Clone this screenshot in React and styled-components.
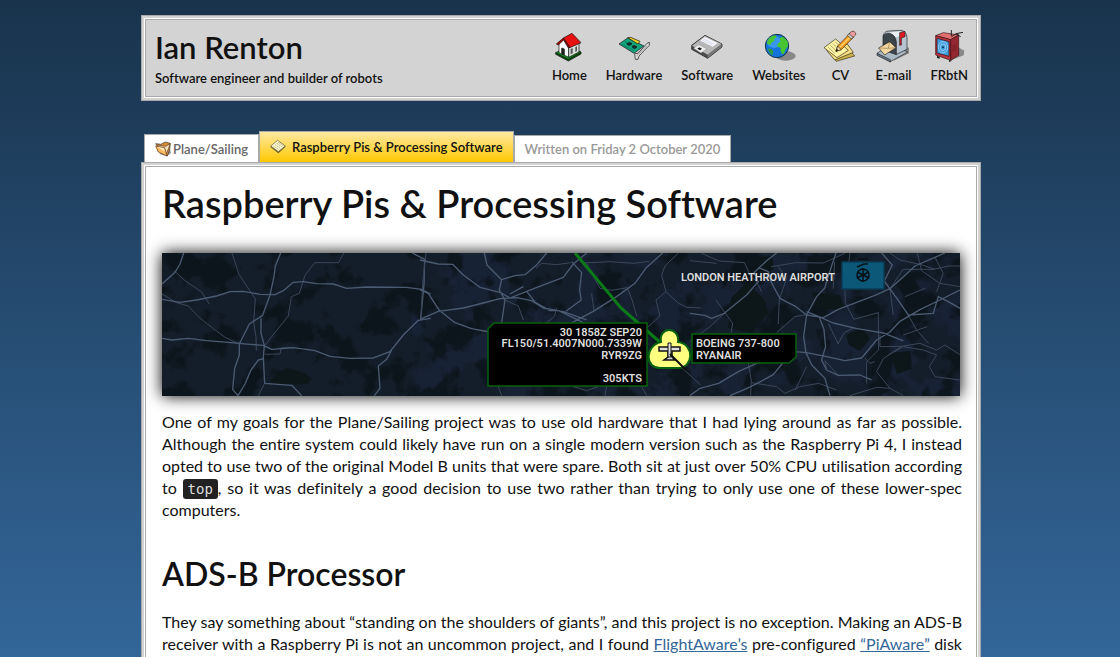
import React from "react";
import styled, { createGlobalStyle } from "styled-components";

const GlobalStyle = createGlobalStyle`
  *, *::before, *::after { box-sizing: border-box; }
  html { min-height: 100%; background: linear-gradient(#19334c, #336699) fixed; }
  body {
    margin: 0;
    color: #111;
    font: 400 16px/22px Lato, "Liberation Sans", sans-serif;
    font-variant-ligatures: none;
  }
`;

const Page = styled.div`
  max-width: 842px;
  margin: 0 auto;
  padding: 15px 0 15px 2px;
`;

const Frame = styled.div`
  border: 1px solid #a9a9a9;
  padding: 2px;
  background: #d3d3d3;
`;

const Masthead = styled.header`
  display: flex;
  justify-content: space-between;
  align-items: flex-start;
  border: 1px solid #fff;
  box-shadow: inset 0 0 0 1px #a9a9a9;
  padding: 9px 9px 9px 10px;
`;

const SiteName = styled.p`
  margin: 0 0 2px;
  font-size: 31px;
  line-height: 38px;
  font-weight: 600;
`;

const Tagline = styled.p`
  margin: 0;
  font-size: 13px;
  line-height: 20px;
  font-weight: 600;
`;

const Nav = styled.nav`
  display: flex;
  gap: 19px;
  padding-top: 2px;
`;

const NavLink = styled.a`
  display: flex;
  flex-direction: column;
  align-items: center;
  gap: 3px;
  color: #111;
  text-decoration: none;
  font-size: 13px;
  line-height: 20px;
  font-weight: 600;
`;

const NavIcon = styled.svg`
  width: 32px;
  height: 32px;
  overflow: visible;
`;

const Tabs = styled.div`
  display: flex;
  align-items: flex-end;
  margin: 30px 3px 0;
`;

const tabTones = {
  parent: { ink: "#666", fill: "#fff", height: 28 },
  current: { ink: "#111", fill: "linear-gradient(#ffe9a3, #ffc800)", height: 31 },
  date: { ink: "#999", fill: "#fff", height: 27 },
};

const Tab = styled.span`
  display: flex;
  align-items: center;
  gap: ${(p) => (p.$tone === "current" ? 6 : 2)}px;
  height: ${(p) => tabTones[p.$tone].height}px;
  padding: 0 10px;
  border: 1px solid #a9a9a9;
  border-bottom: 0;
  background: ${(p) => tabTones[p.$tone].fill};
  color: ${(p) => tabTones[p.$tone].ink};
  font-size: 13px;
  font-weight: 600;
  text-decoration: none;
  white-space: nowrap;
`;

const TabIcon = styled.svg`
  width: 16px;
  height: 16px;
`;

const Article = styled.article`
  border: 1px solid #fff;
  box-shadow: inset 0 0 0 1px #a9a9a9;
  padding: 17px;
  background: #fff;
`;

const Title = styled.h1`
  margin: 0 0 30px;
  font-size: 38px;
  line-height: 40px;
  font-weight: 600;
`;

const Heading = styled.h2`
  margin: 33px 0 17px;
  font-size: 32px;
  line-height: 40px;
  font-weight: 600;
`;

const Text = styled.p`
  margin: 0 -2px 0 0;
  text-align: justify;
  text-align-last: ${(p) => (p.$fullLastLine ? "justify" : "auto")};
`;

const Unbroken = styled.span`
  white-space: nowrap;
`;

const Code = styled.code`
  padding: 2px 5px;
  border-radius: 3px;
  background: #222;
  color: #ddd;
  font: 14px/16px "DejaVu Sans Mono", monospace;
`;

const Link = styled.a`
  color: #336699;
`;

const Banner = styled.svg`
  display: block;
  width: 100%;
  height: 143px;
  margin-bottom: 15px;
  box-shadow: 0 0 15px #000;
`;

const MapText = styled.text`
  font: 600 11px Roboto, sans-serif;
  fill: #ddd;
`;

const icons = {
  Home: (
    <g stroke="#111" strokeWidth="2" strokeLinejoin="round">
      <path d="M8 68 46 88 84 66 84 72 46 93 8 73Z" fill="#050" />
      <path d="M8 68 48 48 84 66 46 88Z" fill="#0a9c14" />
      <path d="M18 40 32 26 47 50 47 82 18 68Z" fill="#fff" />
      <path d="M47 50 78 38 78 66 47 82Z" fill="#d9d9d9" />
      <path d="M31 24 57 10 84 38 50 53Z" fill="#e81010" />
      <path d="M31 24 10 42 16 45 32 30 46 54 51 52Z" fill="#a00" />
      <path d="M26 54 34 57 34 75 26 71Z" fill="#222" />
      <path d="M53 57 59 54V70L53 73ZM67 51 72 49V63L67 66Z" fill="#555" stroke="none" />
    </g>
  ),
  Hardware: (
    <g stroke="#111" strokeWidth="2" strokeLinejoin="round">
      <path d="M3 42 29 24 78 48 48 70Z" fill="#12a57c" />
      <path d="M29 23 38 22 66 34 60 42Z" fill="#e6d42c" />
      <path d="M10 43 46 61M20 35 58 54" stroke="#087052" />
      <path d="M26 42 34 37 42 41 34 47ZM42 51 49 46 57 51 49 56Z" fill="#133" />
      <path d="M50 71 60 70 87 40 94 37V46L63 78 60 88 52 88Z" fill="#dedede" />
      <path d="M57 77 87 47" stroke="#777" />
    </g>
  ),
  Software: (
    <g strokeLinejoin="round">
      <path d="M2 46 42 16 93 42V51L50 85 2 58Z" fill="#4b4b4b" stroke="#111" strokeWidth="2" />
      <path d="M3 47 42 17 92 42 50 74Z" fill="#b6b6b6" />
      <path d="M50 74 92 43V51L50 84Z" fill="#777" />
      <path d="M41 21 80 39 65 50 28 32Z" fill="#f7f7ff" />
      <path d="M38 27 69 42M34 31 64 45" stroke="#c5c9dd" strokeWidth="2" />
      <path d="M23 44 47 56 30 69 8 55Z" fill="#eee" stroke="#777" />
      <path d="M25 52 33 56 27 61 19 56Z" fill="#111" />
    </g>
  ),
  Websites: (
    <g>
      <ellipse cx="68" cy="78" rx="30" ry="14" fill="#888" />
      <circle cx="42" cy="48" r="35" fill="#1672dc" stroke="#134" strokeWidth="3" />
      <ellipse cx="34" cy="36" rx="22" ry="18" fill="#50b0ff" opacity=".6" />
      <path d="M12 35Q20 17 38 16L41 22 33 27 34 33 25 38 23 44 13 43Z" fill="#47c530" />
      <path d="M50 23 60 20 74 34 75 49 68 58 63 71 57 73 52 61 54 54 43 50 44 41 52 35Z" fill="#47c530" />
      <path d="M14 55 24 57 31 64 28 75 21 71Z" fill="#2c9f38" />
    </g>
  ),
  CV: (
    <g stroke="#332d10" strokeWidth="2" strokeLinejoin="round">
      <path d="M17 68 68 50 92 78 37 94Z" fill="#c9b24b" />
      <path d="M8 61 70 42 88 67 32 90Z" fill="#f3dc83" />
      <path d="M0 53 35 27 73 61 39 83Z" fill="#fff3a4" />
      <path d="M12 51 32 70M19 46 40 66M27 41 46 60M34 36 49 50" stroke="#8c865a" />
      <path d="M36 64 41 48 76 12 88 22 52 59Z" fill="#f39a20" />
      <path d="M46 53 82 17" stroke="#ffd26d" strokeWidth="4" />
      <path d="M36 64 41 48 52 59Z" fill="#f2d6a5" />
      <path d="M36 64 38 57 42 61Z" fill="#111" />
      <path d="M72 14 82 5Q90 0 95 9 97 15 91 18L84 25Z" fill="#ef9aa0" />
      <path d="M70 16 75 11 87 22 82 27Z" fill="#ccc" />
    </g>
  ),
  "E-mail": (
    <g stroke="#222" strokeWidth="2" strokeLinejoin="round">
      <path d="M50 92 96 70 96 54 78 46Z" fill="#888" stroke="none" />
      <path d="M0 70 44 42 92 66 40 95Z" fill="#aab8c6" />
      <path d="M18 18Q22 3 36 3L72 1Q88 4 90 22V58L58 73Z" fill="#b7c3cf" />
      <path d="M22 9 70 4 84 12 52 24Z" fill="#e8eef4" stroke="none" />
      <path d="M18 60V20Q23 7 38 10 56 15 58 36V74Z" fill="#3d454c" />
      <path d="M5 54 38 35 57 53 23 75Z" fill="#f2d7a0" />
      <path d="M5 54 34 55 38 35M34 55 57 53" fill="none" stroke="#9a7740" />
      <path d="M68 46V8L84 4V20L73 24V45Z" fill="#e11820" />
      <path d="M0 70 40 89V96L0 76Z" fill="#687888" />
    </g>
  ),
  FRbtN: (
    <g strokeLinejoin="round">
      <path d="M54 91 92 76 94 62 76 52Z" fill="#888" />
      <g stroke="#3a0b10" strokeWidth="2">
        <path d="M8 17 31 8 77 15 53 29Z" fill="#e27070" />
        <path d="M8 17 53 29V91L8 75Z" fill="#bb343d" />
        <path d="M53 29 77 15V76L53 91Z" fill="#942730" />
        <path d="M12 25 48 35V79L12 69Z" fill="#3f9ddd" />
      </g>
      <g fill="none" stroke="#c0e4fb" strokeWidth="2">
        <ellipse cx="30" cy="52" rx="14" ry="17" />
        <ellipse cx="30" cy="52" rx="8" ry="10" />
      </g>
      <circle cx="30" cy="52" r="3" fill="#135" />
      <path d="M55 19V0M56 20 69 11 90 7M70 12 83 20" fill="none" stroke="#222" strokeWidth="3" />
      <path d="M59 50 70 43M59 57 70 50M59 64 70 57" stroke="#541219" strokeWidth="2" />
      <path d="M12 77V84L20 86V80M48 90V96L57 92" fill="#222" />
    </g>
  ),
};

const FolderIcon = () => (
  <TabIcon viewBox="0 0 48 48" aria-hidden="true">
    <path d="M12 39 36 46 48 36 44 20Z" fill="#999" />
    <path d="M2 8 18 10 30 3 46 7 44 26 37 45 22 36Z" fill="#d98c35" stroke="#333" strokeWidth="2" />
    <path d="M6 12 32 16 45 8 41 22 33 40 9 30Z" fill="#f4dfc0" stroke="#5a3a18" strokeWidth="2" />
    <path d="M2 15 29 20 36 45 10 33Z" fill="#ffb85c" stroke="#5a3a18" strokeWidth="2" />
    <path d="M6 18 26 22 29 31Z" fill="#fff0d5" />
  </TabIcon>
);

const NoteIcon = () => (
  <TabIcon viewBox="0 0 48 48" aria-hidden="true">
    <path d="M1 24 23 5 47 23 25 43Z" fill="#6b602c" />
    <path d="M2 21 23 4 46 21 25 38Z" fill="#fffbd2" stroke="#5d552b" strokeWidth="2" />
    <path d="M10 21 26 32M15 17 31 28M20 13 36 24M25 10 39 20" stroke="#99905a" strokeWidth="2" strokeDasharray="5 2" />
  </TabIcon>
);

const westRoads = {
  major: [
    "M36 178 90 187 140 180 200 168 240 155 280 154 330 163 375 164 400 152 430 127 460 125 500 131 550 132 590 145 650 141 770 142 815 148 842 162",
    "M392 39 376 78 372 110 360 165 338 226 298 252 268 312 268 345 254 385 248 448 264 467 285 432 303 390 325 360 341 356",
    "M36 295 65 300 115 295 170 302 235 307 300 313 340 316 365 328 430 323 495 332 540 349 600 355 670 354 720 335 760 285 805 241 842 235",
    "M333 235 333 280 343 316 340 352 344 430 425 436 455 467",
    "M36 132 76 96 90 72 101 39",
    "M787 39 824 58 822 135 812 236",
    "M725 330 710 358 685 378 690 445 673 467",
  ],
  minor: [
    "M36 162 80 188 115 198 147 232 185 262 225 292 268 312",
    "M246 39 267 103 298 150 316 176 311 247 318 290 319 332",
    "M582 39 565 68 525 68 494 68 465 106 448 160 424 170 415 228 365 290 345 316",
    "M72 92 105 122 154 155 178 192M344 343 390 342 394 324 430 323M344 430 325 467",
  ],
};
const midRoads = {
  major: [
    "M0 60 55 72 98 73 130 105 180 142 240 157 270 174 320 154 365 137 430 112 460 72 500 39",
    "M0 238 55 214 130 204 190 189 240 176 290 173 335 182 370 204 430 215 500 240",
    "M0 149 25 160 58 211 105 248 155 266 208 276",
    "M193 39 201 75 245 119 238 150 255 180 245 248",
    "M245 119 285 107 315 104 350 75 380 39M270 162 310 140",
    "M320 154 346 187 390 212 416 212 490 248 540 270",
    "M455 65 485 98 479 150 484 180 438 214",
    "M456 248 520 214 590 170 645 130 679 83 728 39",
  ],
  minor: [
    "M18 39 8 130 3 238M255 180 295 198 310 240M348 85 365 70 410 74 452 68",
    "M486 69 570 65 642 70 688 64M500 70 540 145 575 151 622 143 637 182 650 228",
    "M775 39 735 78 725 105 738 155 773 188 800 202 842 204M738 155 708 180 720 228 680 265",
    "M410 205 403 230 380 248M515 160 522 212M680 269 712 300 750 350 842 435",
    "M460 440 500 452 535 440M560 440 555 467M665 440 680 467M235 440 245 467",
  ],
};
const eastRoads = {
  major: [
    "M0 220 45 226 65 235 103 220 170 165 205 125 192 98 230 62 260 39",
    "M0 467 30 445 86 430 145 395 200 370 260 350 315 335 350 338 410 350 465 362 515 354 560 300 600 276 630 244 690 209 750 180 810 150",
    "M206 83 235 95 243 125 270 175 318 200 350 225 400 233 445 208 500 187 555 166 600 146 652 100 675 78 735 52 765 39",
    "M438 39 425 78 404 145 380 170 350 225 341 290 348 338 366 376 405 415 420 467",
    "M350 215 385 229 430 249 498 265 580 279 640 303",
    "M387 229 402 268 407 320 395 360 410 390 445 406 510 405 545 420",
    "M810 205 775 185 745 170 730 220 655 225 624 180 583 123 607 75 575 39",
    "M120 467 170 446 206 428 250 404 286 360 318 335",
  ],
  minor: [
    "M35 40 88 63 164 68 182 110 198 122 215 155M0 62 80 70",
    "M78 180 105 218 60 260 0 305M105 218 128 250 124 278",
    "M244 80 318 68 400 69 465 40M434 66 430 146M480 39 476 72",
    "M265 252 268 178 290 115 265 80M260 278 315 230 350 224",
    "M465 150 466 188 492 238 565 218 566 330 530 365 530 430",
    "M490 264 463 278 444 312M415 250 445 312",
    "M570 285 570 320 635 319 690 310 740 330 765 315 810 344",
    "M610 225 600 146 640 88 732 88 775 78 810 78M600 39 630 60 690 73 735 88",
    "M682 39 695 92 750 130 810 140M740 155 760 100 735 52",
    "M595 345 640 320 700 330 740 345 718 380 735 410 810 420",
    "M560 395 580 356 635 319M560 395 600 445 640 467M480 467 560 442 600 445",
    "M655 225 680 270 716 310M645 170 705 145M640 285 712 260",
    "M182 467 184 420 175 370M184 428 260 440 285 460 330 440 386 430 440 450",
    "M525 354 540 370 555 365M445 406 405 362 410 390M350 380 316 450",
  ],
};

const Roads = ({ shift, roads }) => (
  <g transform={`translate(${shift} -39)`} fill="none" strokeLinejoin="round">
    <path d={roads.minor.join("")} stroke="#3a475a" strokeWidth="3" />
    <path d={roads.major.join("")} stroke="#4b5b72" strokeWidth="4" />
  </g>
);

const TrackMap = () => (
  <Banner viewBox="0 0 798 143" preserveAspectRatio="xMidYMid slice" role="img" aria-label="Aircraft tracking map">
    <defs>
      <filter id="woodland" x="0" y="0" width="100%" height="100%" colorInterpolationFilters="sRGB">
        <feTurbulence type="fractalNoise" baseFrequency="0.03" numOctaves="5" seed="8" />
        <feColorMatrix values="0 0 0 0 .04  0 0 0 0 .07  0 0 0 0 .085  9 0 0 0 -4.6" />
      </filter>
      <filter id="towns" x="0" y="0" width="100%" height="100%" colorInterpolationFilters="sRGB">
        <feTurbulence type="fractalNoise" baseFrequency="0.024" numOctaves="4" seed="23" />
        <feColorMatrix values="0 0 0 0 .1  0 0 0 0 .14  0 0 0 0 .22  0 9 0 0 -4.2" />
      </filter>
    </defs>
    <rect width="798" height="143" fill="#141e2a" />
    <rect x="250" width="548" height="143" filter="url(#towns)" opacity=".8" />
    <rect width="798" height="143" filter="url(#woodland)" opacity=".75" />
    <g fill="#0d1719">
      <path d="M108 127 125 115 142 120 150 126 145 131 110 131ZM569 45 585 30 602 46 606 60 590 80 566 75ZM597 5 610 3 612 15 602 22 595 14Z" />
      <path d="M684 82 700 74 708 86 698 98 687 92ZM650 39 678 42 682 56 655 57ZM728 100 748 98 750 116 735 121Z" />
    </g>
    <g transform="scale(.3333)">
      <Roads shift={-36} roads={westRoads} />
      <Roads shift={774} roads={midRoads} />
      <Roads shift={1584} roads={eastRoads} />
    </g>
    <path d="M413 0 459 55 500 91" fill="none" stroke="#0b7a17" strokeWidth="3" />
    <path d="M332 70H485V133H326V76Z" fill="#000" stroke="#07610f" strokeWidth="1.5" />
    <g textAnchor="end">
      <MapText x="480" y="83">30 1858Z SEP20</MapText>
      <MapText x="480" y="94">FL150/51.4007N000.7339W</MapText>
      <MapText x="480" y="106">RYR9ZG</MapText>
      <MapText x="480" y="129">305KTS</MapText>
      <MapText x="673" y="28">LONDON HEATHROW AIRPORT</MapText>
    </g>
    <path d="M530 81H634V104L627 110H530Z" fill="#000" stroke="#07610f" strokeWidth="1.5" />
    <MapText x="534" y="94">BOEING 737-800</MapText>
    <MapText x="534" y="106">RYANAIR</MapText>
    <path d="M499 89C496 73 518 73 516 89 533 91 532 116 515 115H499C483 116 482 93 499 89Z" fill="#ffff80" stroke="#07610f" strokeWidth="2" />
    <path d="M497 94H518V98H510V104L513 107H502L506 104V98H497Z" fill="#ddd" stroke="#111" strokeWidth="1.5" />
    <path d="M506 90H509V104H506Z" fill="#ddd" stroke="#111" />
    <path d="M508 101 524 117" stroke="#111" strokeWidth="2" />
    <rect x="680" y="9" width="42" height="27" fill="#0c5878" stroke="#083c55" strokeWidth="1.5" />
    <g fill="none" stroke="#071018" strokeWidth="1.5">
      <circle cx="701" cy="22" r="6" />
      <path d="M701 15V29M695 19 707 25M695 25 707 19M695 14 702 11H706M696 6H706" />
    </g>
  </Banner>
);

export default function App() {
  return (
    <>
      <GlobalStyle />
      <Page>
        <Frame>
          <Masthead>
            <div>
              <SiteName>Ian Renton</SiteName>
              <Tagline>Software engineer and builder of robots</Tagline>
            </div>
            <Nav aria-label="Main">
              {Object.entries(icons).map(([label, icon]) => (
                <NavLink href="#" key={label}>
                  <NavIcon viewBox="0 0 96 96" aria-hidden="true">{icon}</NavIcon>
                  {label}
                </NavLink>
              ))}
            </Nav>
          </Masthead>
        </Frame>
        <Tabs>
          <Tab as="a" href="#" $tone="parent"><FolderIcon />Plane/Sailing</Tab>
          <Tab as="a" href="#" $tone="current"><NoteIcon />Raspberry Pis &amp; Processing Software</Tab>
          <Tab $tone="date">Written on Friday 2 October 2020</Tab>
        </Tabs>
        <Frame>
          <Article>
            <Title>Raspberry Pis &amp; Processing Software</Title>
            <TrackMap />
            <Text>
              One of my goals for the Plane/Sailing project was to use old hardware that I had lying around
              as far as possible. Although the entire system could likely have run on a single modern version
              such as the Raspberry Pi 4, I instead opted to use two of the original Model B units that were
              spare. Both sit at just over 50% CPU utilisation according to <Code>top</Code>, so it was
              definitely a good decision to use two rather than trying to only use one of these lower-spec
              computers.
            </Text>
            <Heading>ADS-B Processor</Heading>
            <Text $fullLastLine>
              They say something about “standing on the shoulders of giants”, and this project is no
              exception. Making an <Unbroken>ADS-B</Unbroken> receiver with a Raspberry Pi is not an uncommon project, and I
              found <Link href="#">FlightAware’s</Link> pre-configured <Link href="#">“PiAware”</Link> disk
            </Text>
          </Article>
        </Frame>
      </Page>
    </>
  );
}
